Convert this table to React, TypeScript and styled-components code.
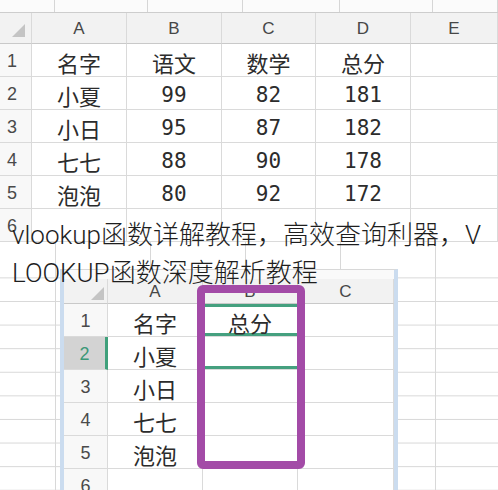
import React from "react";
import styled, { createGlobalStyle, css } from "styled-components";

const Global = createGlobalStyle`
  html, body { margin: 0; padding: 0; background: #fff; }
  body { width: 498px; height: 490px; overflow: hidden; }
`;

const Page = styled.div`
  position: relative;
  width: 498px;
  height: 490px;
  overflow: hidden;
  background: #fff;
  display: flex;
  flex-direction: column;
`;

/* ---------- top strip (row of the sheet above) ---------- */
const TopStrip = styled.div`
  flex: none;
  height: 13px;
  box-sizing: border-box;
  display: flex;
  border-bottom: 1px solid #cdcdcd;
  background: #fbfbfb;
`;

const StripCell = styled.div<{ $w?: number }>`
  box-sizing: border-box;
  height: 100%;
  ${(p) => (p.$w ? css`width: ${p.$w}px; flex: none;` : css`flex: 1;`)}
  border-right: 1px solid #d6d6d6;
`;

/* ---------- generic sheet grid ---------- */
const Grid = styled.div<{ $cols: string; $head: number; $row: number }>`
  display: grid;
  grid-template-columns: ${(p) => p.$cols};
  grid-template-rows: ${(p) => p.$head}px;
  grid-auto-rows: ${(p) => p.$row}px;
  flex: none;
`;

const BaseCell = styled.div`
  box-sizing: border-box;
  border-right: 1px solid #dadada;
  border-bottom: 1px solid #dadada;
  display: flex;
  align-items: center;
  justify-content: center;
  overflow: hidden;
  white-space: nowrap;
`;

const ColHead = styled(BaseCell)`
  background: #f2f2f2;
  border-bottom-color: #c9c9c9;
  font-family: "Liberation Sans", Arial, sans-serif;
  font-size: 17px;
  color: #474747;
  padding-top: 2px;
`;

const Corner = styled(ColHead)<{ $pr: number; $pb: number }>`
  align-items: flex-end;
  justify-content: flex-end;
  padding: 0 ${(p) => p.$pr}px ${(p) => p.$pb}px 0;
`;

const RowHead = styled(BaseCell)<{ $left?: boolean; $hl?: boolean }>`
  background: ${(p) => (p.$hl ? "#d3d3d3" : "#f8f8f8")};
  color: ${(p) => (p.$hl ? "#3c9878" : "#4a4a4a")};
  font-family: "Liberation Sans", Arial, sans-serif;
  font-size: 18px;
  padding-top: 2px;
  justify-content: ${(p) => (p.$left ? "flex-start" : "center")};
  padding-left: ${(p) => (p.$left ? 7 : 0)}px;
  ${(p) =>
    p.$hl &&
    css`
      border-right: 3px solid #3fa07b;
    `}
`;

const DataCell = styled(BaseCell)<{ $num?: boolean; $selTop?: boolean; $selBottom?: boolean }>`
  background: #fff;
  font-family: ${(p) =>
    p.$num ? '"DejaVu Sans Mono", monospace' : '"Noto Sans CJK SC", sans-serif'};
  font-size: ${(p) => (p.$num ? 21 : 22)}px;
  color: #2c2c2c;
  padding-top: 3px;
  box-shadow: ${(p) =>
    [
      p.$selTop ? "inset 0 3px 0 #45a07f" : "",
      p.$selBottom ? "inset 0 -3px 0 #45a07f" : "",
    ]
      .filter(Boolean)
      .join(", ") || "none"};
`;

const Tri = () => (
  <svg width="13" height="13" viewBox="0 0 13 13">
    <path d="M13 0 L13 13 L0 13 Z" fill="#c4c4c4" />
  </svg>
);

/* ---------- lower picture ---------- */
const Lower = styled.div`
  flex: 1;
  display: flex;
  flex-direction: column;
  background-image: linear-gradient(to right, #d8d8d8 1px, transparent 1px);
  background-size: 95px 100%;
  background-position: 55px 0;
  background-repeat: repeat-x;
`;

const LowerGap = styled.div`
  flex: none;
  height: 27px;
`;

const LowerRow = styled.div`
  flex: 1;
  display: flex;
  min-height: 0;
`;

const BgSheet = styled.div<{ $w?: number }>`
  ${(p) => (p.$w ? css`width: ${p.$w}px; flex: none;` : css`flex: 1;`)}
  background-image: linear-gradient(to bottom, #d8d8d8 1px, transparent 1px);
  background-size: 100% 23.6px;
  background-position: 0 8.4px;
`;

const Window = styled.div`
  position: relative;
  width: 338px;
  flex: none;
  box-sizing: border-box;
  background: #fff;
  border-top: 1px solid #d8d8d8;
  border-left: 4px solid #cbdcef;
  border-right: 4px solid #cbdcef;
  display: flex;
  flex-direction: column;
  overflow: hidden;
`;

const WindowBar = styled.div`
  flex: none;
  height: 9px;
  background: #fafafa;
`;

const Highlight = styled.div`
  position: absolute;
  left: 133px;
  top: 15px;
  width: 108px;
  height: 184px;
  box-sizing: border-box;
  border: 8px solid #a34ba7;
  border-radius: 6px;
`;

const Caption = styled.div`
  position: absolute;
  top: 216px;
  left: 12px;
  right: 12px;
  font-family: Roboto, "Noto Sans CJK SC", sans-serif;
  font-weight: 300;
  font-size: 26px;
  line-height: 38px;
  color: #1e1e1e;
  word-break: break-all;
`;

const topCols = "32px 95px 95px 94px 95px 1fr";
const topHead = ["A", "B", "C", "D", "E"];
const topRows: string[][] = [
  ["名字", "语文", "数学", "总分", ""],
  ["小夏", "99", "82", "181", ""],
  ["小日", "95", "87", "182", ""],
  ["七七", "88", "90", "178", ""],
  ["泡泡", "80", "92", "172", ""],
  ["", "", "", "", ""],
];

const winCols = "44px 95px 95px 96px";
const winHead = ["A", "B", "C"];
const winRows: string[][] = [
  ["名字", "总分", ""],
  ["小夏", "", ""],
  ["小日", "", ""],
  ["七七", "", ""],
  ["泡泡", "", ""],
  ["", "", ""],
];

const isNum = (s: string) => /^\d+$/.test(s);

export default function App() {
  return (
    <>
      <Global />
      <Page>
        <TopStrip>
          {[55, 93, 95, 97, 93].map((w, i) => (
            <StripCell key={i} $w={w} />
          ))}
          <StripCell />
        </TopStrip>

        <Grid $cols={topCols} $head={31} $row={33}>
          <Corner $pr={6} $pb={6}>
            <Tri />
          </Corner>
          {topHead.map((h) => (
            <ColHead key={h}>{h}</ColHead>
          ))}
          {topRows.map((row, r) => (
            <React.Fragment key={r}>
              <RowHead $left>{r + 1}</RowHead>
              {row.map((v, c) => (
                <DataCell key={c} $num={isNum(v)}>
                  {v}
                </DataCell>
              ))}
            </React.Fragment>
          ))}
        </Grid>

        <Lower>
          <LowerGap />
          <LowerRow>
            <BgSheet $w={60} />
            <Window>
              <WindowBar />
              <Grid $cols={winCols} $head={25} $row={33}>
                <Corner $pr={3} $pb={3}>
                  <Tri />
                </Corner>
                {winHead.map((h) => (
                  <ColHead key={h}>{h}</ColHead>
                ))}
                {winRows.map((row, r) => (
                  <React.Fragment key={r}>
                    <RowHead $hl={r === 1}>{r + 1}</RowHead>
                    {row.map((v, c) => (
                      <DataCell
                        key={c}
                        $num={isNum(v)}
                        $selTop={c === 1 && r === 0}
                        $selBottom={c === 1 && (r === 0 || r === 1)}
                      >
                        {v}
                      </DataCell>
                    ))}
                  </React.Fragment>
                ))}
              </Grid>
              <Highlight />
            </Window>
            <BgSheet />
          </LowerRow>
        </Lower>

        <Caption>vlookup函数详解教程，高效查询利器，VLOOKUP函数深度解析教程</Caption>
      </Page>
    </>
  );
}
